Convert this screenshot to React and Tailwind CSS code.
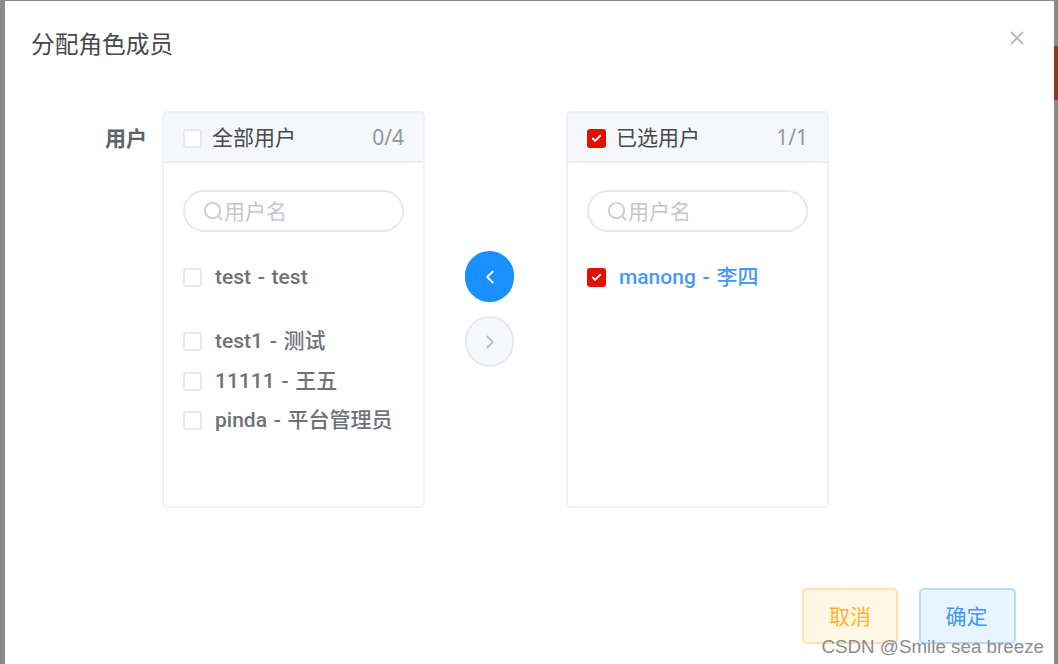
import React from "react";
import { X, ChevronLeft, ChevronRight, Check } from "lucide-react";

const fontStack = "font-['Noto_Sans','Noto_Sans_CJK_SC',sans-serif]";

const Box = ({ checked }) =>
  checked ? (
    <span className="flex h-[19px] w-[19px] shrink-0 items-center justify-center rounded-[3px] bg-[#e01003]">
      <Check className="h-[11px] w-[11px] text-white" strokeWidth={4} />
    </span>
  ) : (
    <span className="h-[19px] w-[19px] shrink-0 rounded-[3px] border-2 border-[#e6e8ef] bg-white" />
  );

const Row = ({ checked, text, className }) => (
  <div className={`flex h-[26px] items-center ${className}`}>
    <Box checked={checked} />
    <span
      className={`ml-[13px] whitespace-pre font-['Roboto','Noto_Sans_CJK_SC',sans-serif] text-[21px] leading-none font-medium [word-spacing:1.5px] ${
        checked ? "text-[#4a97f8]" : "text-[#6f7177]"
      }`}
    >
      {text}
    </span>
  </div>
);

const Panel = ({ checked, title, count, children }) => (
  <div className="h-[397px] w-[263px] overflow-hidden rounded-[5px] border-2 border-[#eef1f8] bg-white">
    <div className="flex h-[50px] items-center border-b-2 border-[#eaeef7] bg-[#f5f7fa] pr-[19px] pl-[19px]">
      <span className="mt-[3px] flex shrink-0">
        <Box checked={checked} />
      </span>
      <span className="ml-[10px] text-[21px] leading-none text-[#46484d]">{title}</span>
      <span className="ml-auto text-[21px] leading-none text-[#94969b]">{count}</span>
    </div>
    <div className="px-[19px] pt-[27px]">
      <div className="flex h-[42px] items-center rounded-full border-2 border-[#e6e8ef] pl-[18px] text-[21px] text-[#c5c7cc]">
        <svg viewBox="0 0 22 22" className="h-[21px] w-[21px] shrink-0" fill="none" stroke="#c9ccd2" strokeWidth="2">
          <circle cx="10" cy="10" r="8" />
          <path d="M16 16l4 4" />
        </svg>
        <span className="leading-none">用户名</span>
      </div>
      <div className="pt-[32px]">{children}</div>
    </div>
  </div>
);

export default function App() {
  return (
    <div className={`relative h-[664px] w-[1058px] overflow-hidden bg-[#8a8a8a] pt-px pr-1 pl-[5px] ${fontStack}`}>
      <div className="absolute top-[46px] right-0 h-[54px] w-1 bg-[#8a3a22]" />
      <div className="flex h-[663px] flex-col bg-white">
        <div className="flex h-[110px] items-start justify-between pt-[28px] pr-[26px] pl-[26px]">
          <h1 className="text-[23.7px] leading-[30px] font-normal text-[#46484d]">分配角色成员</h1>
          <X className="mt-[-2px] h-[22px] w-[22px] text-[#b5b8bf]" strokeWidth={2} />
        </div>
        <div className="flex items-start">
          <div className="w-[142px] pt-[14px] text-right text-[21px] leading-[26px] font-semibold text-[#606266]">用户</div>
          <div className="ml-[15px]">
            <Panel checked={false} title="全部用户" count="0/4">
              <Row text="test - test" />
              <Row text="test1 - 测试" className="mt-[38px]" />
              <Row text="11111 - 王五" className="mt-[14px]" />
              <Row text="pinda - 平台管理员" className="mt-[13px]" />
            </Panel>
          </div>
          <div className="ml-[40px] flex flex-col gap-[14px] pt-[140px]">
            <button className="flex h-[51px] w-[49px] items-center justify-center rounded-full bg-[#1890ff]">
              <ChevronLeft className="h-[22px] w-[22px] text-white" strokeWidth={2} />
            </button>
            <button className="flex h-[51px] w-[49px] items-center justify-center rounded-full border-2 border-[#e6e8ef] bg-[#f5f7fa]">
              <ChevronRight className="h-[22px] w-[22px] text-[#b9bcc3]" strokeWidth={2} />
            </button>
          </div>
          <div className="ml-[52px]">
            <Panel checked title="已选用户" count="1/1">
              <Row checked text="manong - 李四" />
            </Panel>
          </div>
        </div>
        <div className="mt-[80px] flex justify-end gap-[21px] pr-[38px]">
          <button className="flex h-[56px] w-[96px] items-center justify-center rounded-[5px] border-2 border-[#ffe2a8] bg-[#fff6e6] pt-[2px] text-[21px] text-[#ffb42a]">
            取消
          </button>
          <button className="flex h-[56px] w-[97px] items-center justify-center rounded-[5px] border-2 border-[#b5dcff] bg-[#e8f4ff] pt-[2px] pr-[2px] text-[21px] text-[#3f97fb]">
            确定
          </button>
        </div>
      </div>
      <div className="absolute top-[636px] right-[14px] whitespace-nowrap font-['Liberation_Sans',sans-serif] text-[18.8px] leading-[22px] text-[#8c8c8c]">
        CSDN @Smile sea breeze
      </div>
    </div>
  );
}
